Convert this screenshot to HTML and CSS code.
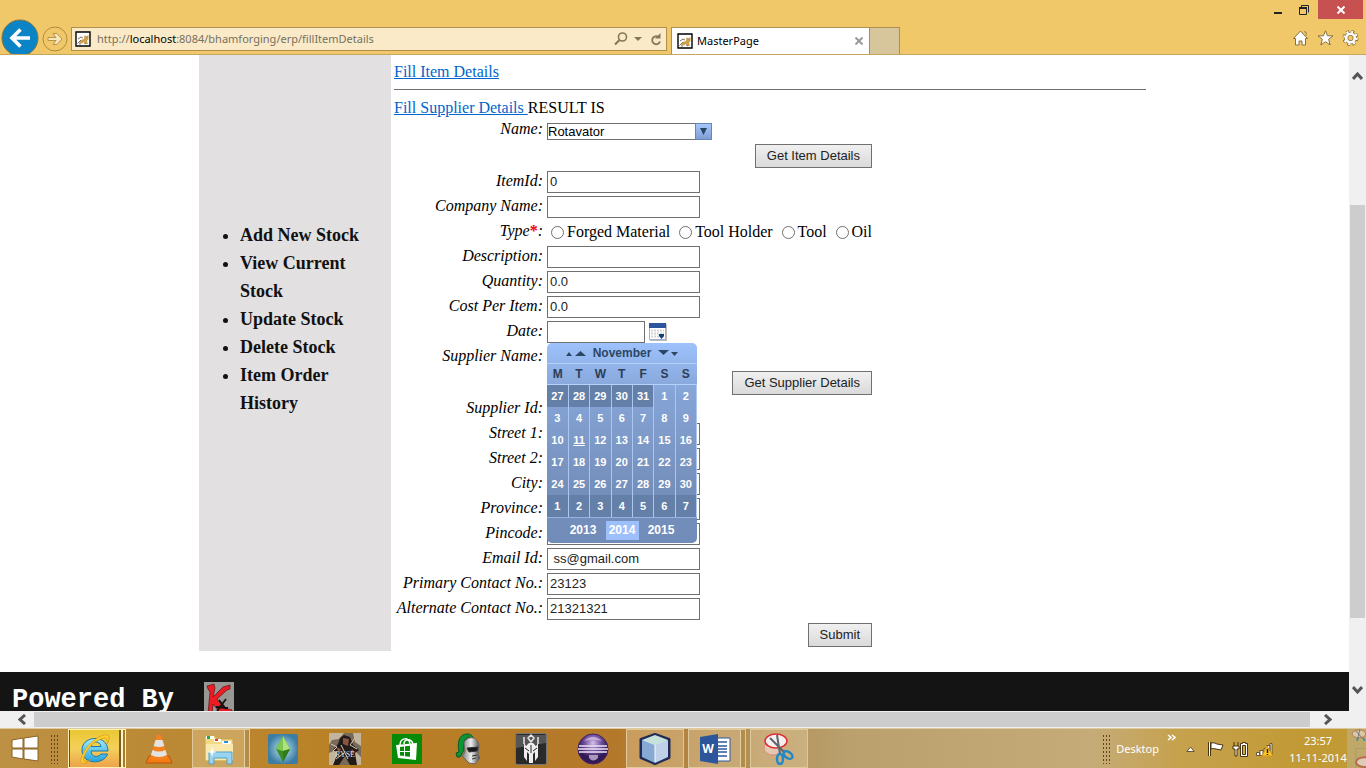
FILE: index.html
```html
<!DOCTYPE html>
<html lang="en">
<head>
<meta charset="utf-8">
<title>MasterPage</title>
<link rel="stylesheet" href="styles.css">
</head>
<body>
<svg class="defs" aria-hidden="true">
  <defs>
    <symbol id="cat" viewBox="0 0 16 16">
      <path d="M1 1h14v14H1z" fill="#fff" stroke="#000" stroke-width="1.400"/>
      <path d="m4 12 2-3 3-1 .5-4 1.500 1.500L13.500 4v4l-1.500 2 1 3h-2l-2-2-2 1.500z" fill="#d3a04a"/>
      <path d="M2.500 12.500 6 9M3 8l3-2 2 1M4 13h2M9 12l2 .8M11 5.500l1 1" stroke="#77736a" fill="none"/>
    </symbol>
    <linearGradient id="ieblue" x2="0" y2="1"><stop stop-color="#a5ecfd"/><stop offset="1" stop-color="#27a3dc"/></linearGradient>
    <radialGradient id="purple" cx=".5" cy=".3"><stop stop-color="#d5c2e8"/><stop offset=".5" stop-color="#7b5aa5"/><stop offset="1" stop-color="#331a57"/></radialGradient>
    <radialGradient id="pool"><stop stop-color="#bfe8ee"/><stop offset="1" stop-color="#3d7da4"/></radialGradient>
    <linearGradient id="steel"><stop stop-color="#777"/><stop offset=".5" stop-color="#eee"/><stop offset="1" stop-color="#444"/></linearGradient>
  </defs>
</svg>

<header class="browser">
  <div class="nav">
    <button class="back" aria-label="Back"><svg viewBox="0 0 36 36"><circle cx="18" cy="18" r="18" fill="#0b84c5" stroke="#7e7440"/><path d="M28 18H10M18.500 9.500 10 18l8.500 8.500" fill="none" stroke="#fff" stroke-width="3.600"/></svg></button>
    <button class="forward" aria-label="Forward"><svg viewBox="0 0 26 26"><circle cx="13" cy="13" r="12" fill="none" stroke="#b08b40"/><path d="M6 11.500h8l-3-4h4l5 5.500-5 5.500h-4l3-4H6z" fill="#f8e6bd" stroke="#b8934a"/></svg></button>
  </div>
  <div class="address">
    <svg class="fav"><use href="#cat"/></svg>
    <div class="url">http://<b>localhost</b>:8084/bhamforging/erp/fillItemDetails</div>
    <button aria-label="Search"><svg width="14" height="14" viewBox="0 0 14 14"><circle cx="8.500" cy="5" r="4" fill="none" stroke="#837858" stroke-width="1.600"/><path d="M5.500 8 1 12.500" stroke="#837858" stroke-width="2.200"/></svg></button>
    <button aria-label="Suggestions"><svg width="8" height="5" viewBox="0 0 8 5"><path d="M0 0h8L4 4z" fill="#837858"/></svg></button>
    <button class="reload" aria-label="Refresh"><svg width="12" height="13" viewBox="0 0 12 13"><path d="M8.500 4A4 4 0 1 0 10 8.500" fill="none" stroke="#837858" stroke-width="1.800"/><path d="M10.500 0v5.500H5z" fill="#837858"/></svg></button>
  </div>
  <div class="tab"><svg class="fav"><use href="#cat"/></svg><span>MasterPage</span>
    <button aria-label="Close tab"><svg width="8" height="8" viewBox="0 0 8 8"><path d="M.5.5l7 7m0-7-7 7" stroke="#9a9a9a" stroke-width="2"/></svg></button></div>
  <button class="newtab" aria-label="New tab"></button>
  <div class="window">
    <div class="controls">
      <button aria-label="Minimize"><svg width="8" height="10" viewBox="0 0 8 10"><path d="M0 8h8" stroke="#222" stroke-width="2"/></svg></button>
      <button aria-label="Restore"><svg width="10" height="10" viewBox="0 0 10 10"><path d="M.5 3.500h7v6h-7zM2.500 2V.5h7v7" fill="none" stroke="#222"/><path d="M0 3h8" stroke="#222" stroke-width="2"/></svg></button>
      <button class="close" aria-label="Close"><svg width="8" height="8" viewBox="0 0 8 8"><path d="M.5.5l7 7m0-7-7 7" stroke="#fff" stroke-width="2"/></svg></button>
    </div>
    <div class="tools">
      <button aria-label="Home"><svg viewBox="0 0 16 16"><path d="M1 8.500 8 1l7 7.500h-2V15H9.500v-4h-3v4H3V8.500z" fill="#fff" stroke="#87703c"/><path d="M11.500 2h2v3.500" fill="#fff" stroke="#87703c"/></svg></button>
      <button aria-label="Favorites"><svg viewBox="0 0 16 16"><path d="m8 .8 2 5h5.500l-4.400 3.500 1.600 5.700L8 11.700 3.300 15l1.600-5.700L.5 5.800H6z" fill="#fff" stroke="#87703c"/></svg></button>
      <button aria-label="Settings"><svg viewBox="0 0 16 16"><circle cx="8" cy="8" r="6.500" fill="none" stroke="#87703c" stroke-width="3" stroke-dasharray="2.900 2.200"/><circle cx="8" cy="8" r="4.300" fill="none" stroke="#87703c" stroke-width="4"/><circle cx="8" cy="8" r="6.300" fill="none" stroke="#fff" stroke-width="2" stroke-dasharray="2 2.950"/><circle cx="8" cy="8" r="4.300" fill="none" stroke="#fff" stroke-width="2.600"/></svg></button>
    </div>
  </div>
</header>

<div class="view">
  <div class="page">
    <div class="columns">
      <nav class="side">
        <ul>
          <li>Add New Stock</li>
          <li>View Current Stock</li>
          <li>Update Stock</li>
          <li>Delete Stock</li>
          <li>Item Order History</li>
        </ul>
      </nav>
      <main>
        <p><a href="#item">Fill Item Details</a></p>
        <hr>
        <p><a href="#supplier">Fill Supplier Details </a>RESULT IS</p>
        <form>
          <label for="name">Name:</label>
          <div class="combo"><select id="name"><option>Rotavator</option></select><span class="arrow"><svg width="7" height="7" viewBox="0 0 7 7"><path d="M0 0h7L3.500 7z" fill="#2b4664"/></svg></span></div>
          <button type="button" class="action">Get Item Details</button>
          <label for="itemid">ItemId:</label><input id="itemid" type="text" value="0">
          <label for="company">Company Name:</label><input id="company" type="text">
          <span class="label">Type<b class="req">*</b>:</span>
          <div class="radios">
            <label><input type="radio" name="type">Forged Material</label>
            <label><input type="radio" name="type">Tool Holder</label>
            <label><input type="radio" name="type">Tool</label>
            <label><input type="radio" name="type">Oil</label>
          </div>
          <label for="desc">Description:</label><input id="desc" type="text">
          <label for="qty">Quantity:</label><input id="qty" type="text" value="0.0">
          <label for="cost">Cost Per Item:</label><input id="cost" type="text" value="0.0">
          <label for="date">Date:</label>
          <div class="date">
            <input id="date" type="text">
            <button type="button" class="pick" aria-label="Pick a date"><svg width="18" height="18" viewBox="0 0 18 18"><path d="M1 1h17v17H1z" fill="#bbb"/><path d="M.5.5h16v16H.5z" fill="#fff" stroke="#9db0cf"/><path d="M0 0h17v5H0z" fill="#2c55a0"/><path d="M2 7.500h13M2 10.500h13M2 13.500h13" stroke="#d4d4d4" stroke-width="2" stroke-dasharray="2 1"/><path d="M10 11h5v2l-2.500 3-2.500-3z" fill="#123e75"/></svg></button>
            <div class="calendar">
              <div class="month">
                <svg width="20" height="8" viewBox="0 0 20 8"><path d="M0 7h6L3 3zM9 7h11l-5.500-5z" fill="#2c4763"/></svg>
                <span>November</span>
                <svg width="20" height="8" viewBox="0 0 20 8"><path d="M0 1h11L5.500 6zM13 3h7l-3.500 4z" fill="#2c4763"/></svg>
              </div>
              <table>
                <thead><tr><th>M</th><th>T</th><th>W</th><th>T</th><th>F</th><th>S</th><th>S</th></tr></thead>
                <tbody>
                <tr><td class="out">27</td><td class="out">28</td><td class="out">29</td><td class="out">30</td><td class="out">31</td><td>1</td><td>2</td></tr>
                <tr><td>3</td><td>4</td><td>5</td><td>6</td><td>7</td><td>8</td><td>9</td></tr>
                <tr><td>10</td><td class="today">11</td><td>12</td><td>13</td><td>14</td><td>15</td><td>16</td></tr>
                <tr><td>17</td><td>18</td><td>19</td><td>20</td><td>21</td><td>22</td><td>23</td></tr>
                <tr><td>24</td><td>25</td><td>26</td><td>27</td><td>28</td><td>29</td><td>30</td></tr>
                <tr><td class="out">1</td><td class="out">2</td><td class="out">3</td><td class="out">4</td><td class="out">5</td><td class="out">6</td><td class="out">7</td></tr>
                </tbody>
              </table>
              <div class="years"><button type="button">2013</button><button type="button" class="on">2014</button><button type="button">2015</button></div>
            </div>
          </div>
          <span class="label">Supplier Name:</span><span></span>
          <button type="button" class="action">Get Supplier Details</button>
          <span class="label">Supplier Id:</span><span></span>
          <label for="s1">Street 1:</label><input id="s1" type="text">
          <label for="s2">Street 2:</label><input id="s2" type="text">
          <label for="city">City:</label><input id="city" type="text">
          <label for="prov">Province:</label><input id="prov" type="text">
          <label for="pin">Pincode:</label><input id="pin" type="text">
          <label for="mail">Email Id:</label><input id="mail" type="text" value=" ss@gmail.com">
          <label for="tel1">Primary Contact No.:</label><input id="tel1" type="text" value="23123">
          <label for="tel2">Alternate Contact No.:</label><input id="tel2" type="text" value="21321321">
          <button type="button" class="action">Submit</button>
        </form>
      </main>
    </div>
    <footer><span>Powered By</span>
      <svg width="30" height="40" viewBox="0 0 30 40"><path d="M0 0h30v40H0z" fill="#999794"/><path d="M3 4 10 2l1 4-2 9L19 5l7-2v4l-3 1-10 9 7 9 8 2v4H17l-8-10-1 10H4l2-22-2-3z" fill="#ec1c24" stroke="#5d1215" stroke-width=".7"/><path d="m15 18 7 9m0-10-9 12m-1-4 12 1" stroke="#111" stroke-width="1.800"/></svg>
    </footer>
  </div>
  <div class="vbar">
    <button aria-label="Scroll up"><svg width="11" height="8" viewBox="0 0 11 8"><path d="M1 7l4.500-5L10 7" fill="none" stroke="#555" stroke-width="3"/></svg></button>
    <i class="before"></i><i class="thumb"></i><i class="after"></i>
    <button aria-label="Scroll down"><svg width="11" height="8" viewBox="0 0 11 8"><path d="M1 1l4.500 5L10 1" fill="none" stroke="#555" stroke-width="3"/></svg></button>
  </div>
</div>
<div class="hbar">
  <button aria-label="Scroll left"><svg width="8" height="11" viewBox="0 0 8 11"><path d="M7 1 2 5.500 7 10" fill="none" stroke="#555" stroke-width="3"/></svg></button>
  <i class="thumb"></i>
  <button class="right" aria-label="Scroll right"><svg width="8" height="11" viewBox="0 0 8 11"><path d="M1 1l5 4.500L1 10" fill="none" stroke="#555" stroke-width="3"/></svg></button>
</div>

<footer class="taskbar">
  <button class="start" aria-label="Start"><svg width="28" height="27" viewBox="0 0 28 27"><path d="M1 5l11-2v10H1zM13 3l14-2v12H13zM1 14h11v10L1 22zM13 14h14v12l-14-2z" fill="#fff" stroke="#8a6425"/></svg></button>
  <i class="grip"></i>
  <div class="apps">
    <button class="open double active" aria-label="Internet Explorer"><svg width="32" height="32" viewBox="0 0 32 32"><path d="M29 18H12c0 6 7 7 10 3h6.500C25 32 3 32 3 17 3 2 29 1 29 18zM12 13.500h10c-1-6-9-6-10 0z" fill="url(#ieblue)" stroke="#1478ad"/><path d="M20 4c9-5 13-1 8 7 1-7-2-7-7-4.500C12 10 6 19 4.500 26c0 4 4 3 7 .500-5 5-12 6-9-2.500C5.500 16 12 8 20 4z" fill="#ffd02e" stroke="#d29a13" stroke-width=".7"/></svg></button>
    <button aria-label="VLC"><svg width="30" height="32" viewBox="0 0 30 32"><path d="M5 23h20l3 7H2z" fill="#f47b12" stroke="#b9550a"/><path d="M13 2h4l7 23q-9 4-18 0z" fill="#f58220"/><path d="M11.500 7h7l1.800 6q-5.300 2-10.600 0zM8.500 17q6.500 3 13 0l1.500 5q-8 4-16 0z" fill="#e3e3e3"/></svg></button>
    <button class="open double" aria-label="File Explorer"><svg width="34" height="32" viewBox="0 0 34 32"><path d="M3 3h10l2 3h16v22H3z" fill="#f3d981" stroke="#c8a650"/><path d="M4 3h8v3H4z" fill="#fff"/><path d="M5 3h3v3H5z" fill="#1dae3b"/><path d="M12 6h7v3h-7z" fill="#fff"/><path d="M13 6h3v2h-3z" fill="#d43b25"/><path d="M20 8h9v3h-9z" fill="#fff"/><path d="M22 8h4v2h-4z" fill="#2491dd"/><path d="M4 11h27v16H4z" fill="#f9e9ae"/><path d="M7 19h23v12h-5v-6H12v6H7z" fill="#98d4ef" stroke="#529fc4"/><path d="m10 13 1 5 4 1-4 1-1 4-1-4-4-1 4-1z" fill="#fff"/></svg></button>
    <button aria-label="The Sims"><svg width="30" height="30" viewBox="0 0 30 30"><rect width="30" height="30" rx="2" fill="#3d7da4"/><circle cx="15" cy="15" r="15" fill="url(#pool)"/><path d="M15 2 8 15l7 13 7-13z" fill="#3c8e24"/><path d="M15 2v15l-7-2z" fill="#7cc850"/><path d="M15 2v15l7-2z" fill="#b2e07c"/><path d="M15 17v11l7-13z" fill="#2f7c1e"/></svg></button>
    <button aria-label="Ryse"><svg class="ryse" width="32" height="32" viewBox="0 0 32 32"><path d="M0 0h32v32H0z" fill="#776a59"/><path d="M0 0h15l-5 6-7 1-3 5zM24 0h8v13l-6-4zM0 20l9-4-4 16H0zM26 18l6 6v8h-7z" fill="#c3b49d"/><path d="m11 5 4-3 6 2 3 8 6 5-4 3 2 12h-7l-5-9-6 9H4l5-12-5-3 5-6z" fill="#211b19"/><path d="m14 5 6 1-1 7-5-2zm-7 9 5 2-2 4zm16 2 3 4-5 1z" fill="#8c5540"/><path d="m2 11 6 3-4 4M26 5l-5 7 7 4M12 12l7 14M7 26l8-6" stroke="#d8cab6" fill="none"/><text x="16" y="24" text-anchor="middle" fill="#ddd" font-size="8">RYSE</text></svg></button>
    <button aria-label="Store"><svg width="30" height="30" viewBox="0 0 30 30"><path d="M0 0h30v30H0z" fill="#078b07"/><path d="m4 11 21-2-1 17-18-2z" fill="#fff"/><path d="M8 11c0-7 9-9 10-1M12 10c0-5 7-6 9 0" fill="none" stroke="#fff" stroke-width="1.500"/><path d="m8 13 4-.5V17H8zM13 12.300l5-.5V17h-5zM8 18h4v4l-4-.5zM13 18h5v4.800l-5-.6z" fill="#078b07"/></svg></button>
    <button aria-label="Knight game"><svg width="28" height="32" viewBox="0 0 28 32"><path d="M2 24 1 20l3-1C2 10 4 1 12 1c4 0 6 2 6 5l-4-2c-5 1-6 7-5 13l-4 7z" fill="#0a9535" stroke="#095a25"/><path d="M9 10c2-7 14-8 15 3l-1 8 2 4-5 6-6-1-7-7 3-4z" fill="url(#steel)" stroke="#666"/><path d="m12 15 11-1-1 4-8 1zM17 23l5-1M17 26l4-1" fill="#171717" stroke="#333"/></svg></button>
    <button aria-label="Fantasy game"><svg width="32" height="32" viewBox="0 0 32 32"><rect x=".5" y=".5" width="31" height="31" rx="2" fill="#2a2a2a" stroke="#777"/><path d="m1 15 30-5V2H1z" fill="#555"/><path d="M9 10v14l3 4v-9l2 2v9h4v-9l2-2v9l3-4V10l-2 3-3-3h-4l-3 3z" fill="#eee"/><path d="M9 4v7M23 4v7M16 2l3 3-3 4-3-4z" fill="none" stroke="#e8e8e8" stroke-width="1.500"/><path d="m10 15 4 3m8-3-4 3M16 12v8" stroke="#222"/></svg></button>
    <button aria-label="Eclipse"><svg width="32" height="32" viewBox="0 0 32 32"><circle cx="16" cy="16" r="15" fill="url(#purple)" stroke="#432267"/><path d="M2 13h28M1 16h30M2 19h28" stroke="#eee5f7" stroke-width="1.500"/><path d="M7 8q9-8 18 0-9-3-18 0M12 25q4 5 9 0v-3h-9z" fill="#d8c9e8" opacity=".7"/></svg></button>
    <button class="open" aria-label="NetBeans"><svg width="32" height="32" viewBox="0 0 32 32"><path d="m16 1.500 14 5v18l-14 6-14-6v-18z" fill="#d7e9f4" stroke="#202b57" stroke-width="3" stroke-linejoin="round"/><path d="m3 7 13 5v18L3 24z" fill="#86aad4"/><path d="m16 12 13-5v17l-13 6z" fill="#bfd1e9"/><path d="m16 2 13 5-13 5L3 7z" fill="#c6e0dc"/><path d="M16 12v17" stroke="#f6fbff"/></svg></button>
    <button class="open double" aria-label="Word"><svg width="32" height="32" viewBox="0 0 32 32"><path d="M17 5h14v23H17z" fill="#fff" stroke="#2c58a0"/><path d="M18 9h10m-10 4h10m-10 3h10m-10 3h10m-10 4h10" stroke="#2c58a0" stroke-width="1.500"/><path d="m1 4 18-3v30L1 28z" fill="#2b579a"/><text x="9" y="20" text-anchor="middle" font-size="12" font-weight="bold" fill="#fff">W</text></svg></button>
    <button class="open" aria-label="Snipping Tool"><svg width="32" height="32" viewBox="0 0 32 32"><ellipse cx="10" cy="15" rx="9" ry="7" fill="#e6c7b1" stroke="#dc8e80"/><ellipse cx="13" cy="8" rx="11" ry="7" fill="#f7efef" stroke="#dc2e31" stroke-width="1.500"/><path d="m7 5 15 15M14 2l3 19" stroke="#5d656b" stroke-width="2"/><ellipse cx="17" cy="26" rx="3" ry="5" fill="none" stroke="#2088c8" stroke-width="2.500"/><ellipse cx="25" cy="22" rx="5" ry="3" fill="none" stroke="#2088c8" stroke-width="2.500" transform="rotate(35 25 22)"/></svg></button>
  </div>
  <div class="tray">
    <i class="grip"></i>
    <span class="desktop">Desktop</span>
    <svg class="more" width="9" height="7" viewBox="0 0 9 7"><path d="M1 1l3 2.500L1 6M5 1l3 2.500L5 6" fill="none" stroke="#fff" stroke-width="1.500"/></svg>
    <button class="up" aria-label="Show hidden icons"><svg width="9" height="6" viewBox="0 0 9 6"><path d="M.8 5.500 4.500 1l3.700 4.500z" fill="#fff" stroke="#6a5732"/></svg></button>
    <svg width="16" height="16" viewBox="0 0 16 16"><path d="M1.500 1v14" stroke="#473514" stroke-width="3"/><path d="M3 2q3-1 6 1l6 1-2 5-5-1q-3-1-5 0z" fill="#fff" stroke="#473514"/><path d="M1.500 1v14" stroke="#fff"/></svg>
    <svg width="16" height="16" viewBox="0 0 16 16"><path d="M2 1v4m4-4v4M1 5h6v3H5v7H3V8H1z" fill="#fff" stroke="#473514"/><path d="M8.500 2.500h2v-1h3v1h2v13h-7z" fill="#fff" stroke="#473514"/><path d="M10.500 4.500h3v9h-3z" fill="#cda83d" stroke="#473514"/></svg>
    <svg width="17" height="16" viewBox="0 0 17 16"><path d="M.5 11.500h3v3h-3zM4 9.500h3v5H4zM8 7.500h3v7H8zM11 4.500h3v10h-3zM14 2.500h2v12h-2z" fill="#fff" stroke="#6a5732"/><path d="m11 5 6 10H6z" fill="#ffc61b" stroke="#d6911a"/><path d="M11.500 8v4m0 1v1" stroke="#222" stroke-width="1.500"/></svg>
    <div class="clock"><span>23:57</span><span>11-11-2014</span></div>
    <div class="edge" aria-hidden="true"><svg width="19" height="39" viewBox="0 0 19 40"><path d="M9 20h10M9 20v20" stroke="#aa9a70" fill="none"/><ellipse cx="12" cy="5" rx="7" ry="4" fill="#d9c7a8" stroke="#b8794d"/><path d="m8 1 7 8M13 0l-2 9" stroke="#777"/><path d="m11 9-1 3m6-3 2 3" stroke="#4a929b" stroke-width="2"/><ellipse cx="18" cy="34" rx="9" ry="5" fill="#ddcdb4" stroke="#b96a4f" stroke-width="2"/></svg></div>
  </div>
</footer>
</body>
</html>
```
FILE: styles.css
```css
* { box-sizing: border-box; }
body {
  margin: 0;
  height: 100vh;
  display: flex;
  flex-direction: column;
  overflow: hidden;
  background: #fff;
  color: #000;
  font: 16px/20px "Liberation Serif", serif;
}
button { margin: 0; padding: 0; border: 0; background: none; font: inherit; color: inherit; }
svg { display: block; flex: none; }
.defs { position: absolute; width: 0; height: 0; }

/* Browser frame */
.browser {
  flex: none;
  display: flex;
  align-items: flex-end;
  height: 55px;
  background: #f0c869;
  border-bottom: 1px solid #c6a65c;
  font: 11px/16px "Noto Sans", "Open Sans", sans-serif;
}
.nav { flex: none; display: flex; align-self: stretch; align-items: flex-end; gap: 4px; width: 71px; padding-left: 2px; overflow: hidden; }
.back { height: 34px; }
.back svg { width: 36px; height: 36px; overflow: visible; }
.forward { padding-bottom: 2px; }
.forward svg { width: 26px; height: 26px; }
.address {
  flex: 1;
  display: flex;
  align-items: center;
  gap: 6px;
  height: 24px;
  margin: 0 4px 3px 0;
  padding: 0 4px 0 3px;
  border: 1px solid #b08f4c;
  background: #faeac8;
}
.fav { width: 16px; height: 16px; }
.url { flex: 1; color: #77705f; }
.url b { font-weight: normal; color: #000; }
.reload { margin-left: 2px; }
.tab {
  flex: 0 0 199px;
  display: flex;
  align-items: center;
  gap: 4px;
  height: 27px;
  padding: 0 6px 0 5px;
  border: 1px solid #b08f4c;
  border-bottom: 0;
  background: #fff;
}
.tab span { flex: 1; }
.newtab { flex: none; width: 30px; height: 27px; border: 1px solid #b08f4c; border-width: 1px 1px 0 0; background: #d7c59c; }
.window { flex: 0 0 466px; align-self: stretch; display: flex; flex-direction: column; justify-content: space-between; align-items: flex-end; }
.controls { display: flex; align-items: center; gap: 17px; padding-right: 3px; }
.close { display: flex; justify-content: center; align-items: center; width: 45px; height: 19px; margin-left: -8px; background: #c75050; }
.tools { display: flex; gap: 8px; padding: 0 7px 8px 0; }
.tools svg { width: 17px; height: 16px; }

/* Viewport and scroll bars */
.view { flex: 1; min-height: 0; display: flex; }
.page { flex: 1; overflow: hidden; }
.vbar { display: flex; flex-direction: column; width: 17px; background: #f0f0f0; }
.vbar button { display: flex; align-items: center; justify-content: center; height: 42px; }
.before { flex: 108; }
.thumb { background: #cdcdcd; }
.vbar .thumb { flex: 413; margin: 0 1px; }
.after { flex: 51; }
.hbar { flex: none; display: flex; height: 17px; background: #f0f0f0; }
.hbar button { display: flex; align-items: center; justify-content: center; width: 34px; padding-left: 9px; }
.hbar .thumb { flex: 1; margin: 1px 0; }
.hbar .right { width: 56px; padding: 0 20px 0 0; }

/* Page */
.columns { display: flex; max-width: 951px; margin: 0 auto; }
.side { flex: none; width: 192px; padding-top: 166px; background: #e2e0e1; font: bold 18px/28px "Liberation Serif", serif; color: #111; }
.side ul { margin: 0; padding: 0 20px 0 41px; }
main { flex: 1; padding: 7px 4px 4px 3px; }
p { margin: 0; }
hr { margin: 7px 0 8px; border: 0; border-top: 1px solid #707070; }
a { color: #0066cc; }
form {
  display: grid;
  grid-template-columns: 149px 325px;
  grid-auto-rows: minmax(22px, auto);
  gap: 3px 4px;
  padding-top: 1px;
}
form > label, .label { text-align: right; font-style: italic; }
.req { color: #e00; font-style: normal; }
form input[type="text"] {
  width: 153px;
  height: 22px;
  padding: 0 2px 2px;
  border: 1px solid #707070;
  background: #fff;
  color: #222;
  font: 13px/18px "Liberation Sans", sans-serif;
}
.action {
  grid-column: 2;
  justify-self: end;
  height: 24px;
  padding: 0 11px 1px;
  border: 1px solid #707070;
  background: linear-gradient(#f0f0f0, #dadada);
  color: #222;
  font: 13px/18px "Liberation Sans", sans-serif;
}
.combo { position: relative; width: 165px; height: 17px; margin-top: 4px; }
.combo select {
  display: block;
  width: 100%;
  height: 17px;
  padding: 0;
  appearance: none;
  border: 1px solid #707070;
  border-radius: 0;
  background: #fff;
  color: #000;
  font: 13px/15px "Liberation Sans", sans-serif;
}
.arrow {
  position: absolute;
  top: 0;
  right: 0;
  display: flex;
  align-items: center;
  justify-content: center;
  width: 17px;
  height: 17px;
  border: 1px solid #6686b5;
  background: linear-gradient(#a5c7fb, #7f9fd4);
  pointer-events: none;
}
.radios { display: flex; justify-content: space-between; padding-left: 4px; white-space: nowrap; }
.radios label { display: flex; align-items: center; gap: 3px; }
.radios input { width: 13px; height: 13px; margin: 0; appearance: none; border: 1px solid #707070; border-radius: 50%; background: #fff; }

/* Date picker */
.date { position: relative; display: flex; gap: 4px; }
form .date input { width: 98px; }
.calendar {
  position: absolute;
  z-index: 1;
  top: 22px;
  left: 0;
  width: 150px;
  overflow: hidden;
  border-radius: 5px;
  background: linear-gradient(#9dc1fb, #85a4d6 25%, #7690bc 70%, #718cb9);
  color: #fff;
  font: bold 12px/20px "Liberation Sans", sans-serif;
}
.month { display: flex; align-items: center; justify-content: center; gap: 7px; height: 21px; border-bottom: 1px solid #b5d2ff; color: #2c4763; }
.calendar table { width: 100%; table-layout: fixed; border-collapse: collapse; }
.calendar th { height: 20px; padding: 0; border-bottom: 1px solid #b5d2ff; color: #2c3e55; line-height: 20px; }
.calendar td { height: 22px; padding: 0; border-right: 1px solid #abc6ef; text-align: center; font-size: 11px; line-height: 20px; }
.calendar td.out { background: #6580a8; }
.today { text-decoration: underline; }
.years { display: flex; justify-content: center; gap: 6px; height: 26px; padding: 3px 0; border-top: 1px solid #98b3df; }
.years button { width: 33px; line-height: 18px; }
.years .on { background: #9dbffb; }

.page footer { display: flex; gap: 30px; height: 80px; margin-top: 21px; padding: 10px 12px; background: #141414; color: #fff; font: bold 27px/36px "Liberation Mono", monospace; }

/* Taskbar */
.taskbar {
  flex: none;
  display: flex;
  align-items: center;
  height: 40px;
  border-top: 1px solid #dcc9a0;
  background: linear-gradient(90deg, #bd9144, #b98125 25%, #b4782a 45%, #b18b50 53%, #b9a06d 62%, #c5ab78 80%, #c6a24f 86%, #c29a35 95%);
  color: #fff;
  font: 11px/17px "Noto Sans", "Open Sans", sans-serif;
}
.start { padding: 0 11px; }
.grip { flex: none; width: 9px; height: 30px; background: radial-gradient(circle, #5d451d 1px, transparent 1px) 0 0 / 3px 4px; }
.apps { display: flex; gap: 4px; height: 100%; margin-left: 9px; }
.apps button { display: flex; align-items: center; justify-content: center; width: 58px; }
.apps .open { border: 1px solid #dfc99b; background: rgba(240, 222, 180, .35); }
.apps .double { padding-right: 5px; box-shadow: inset -4px 0 0 #b18d4c, inset -5px 0 0 #e4d0a0; }
.apps .active { border-color: #fff3b4; background: linear-gradient(#eac733, #f4d05b 50%, #eda34b); box-shadow: inset -2px 0 0 #a37c2c, inset -4px 0 0 #fff3c4, inset -6px 0 0 #7d5f23, inset 1px 0 0 #6b5019; }
.apps text { font-family: "Open Sans", "Noto Sans", sans-serif; }
.ryse text { font-family: "Liberation Serif", serif; }
.tray { display: flex; align-items: center; gap: 8px; margin-left: auto; }
.tray .grip { margin-right: -3px; }
.more { align-self: flex-start; margin: 5px 2px 0 0; }
.up { margin-right: 5px; }
.clock { display: flex; flex-direction: column; align-items: center; width: 58px; margin-left: 8px; }
.edge { margin-left: -8px; background: #c0a868; }
```
